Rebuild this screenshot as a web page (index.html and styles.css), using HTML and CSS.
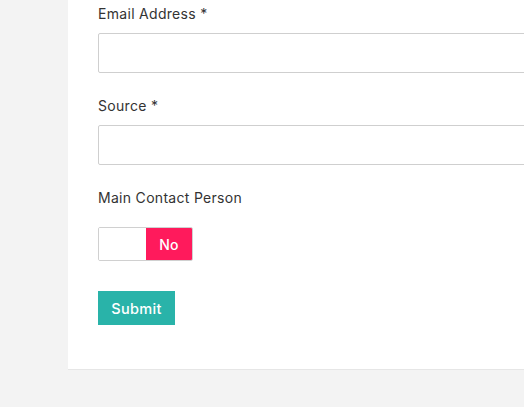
FILE: index.html
```html
<!DOCTYPE html>
<html>
    <head>
        <link rel="stylesheet" href="styles.css">
    </head>
    <body>
        <div class="card">
            <form class="form">
                <div class="group">
                    <label class="lbl">Email Address *</label>
                    <input class="field" type="text">
                </div>
                <div class="group">
                    <label class="lbl">Source *</label>
                    <input class="field" type="text">
                </div>
                <div class="group last">
                    <label class="lbl">Main Contact Person</label>
                </div>
                <div class="toggle">
                    <span class="toggle-off"></span>
                    <span class="toggle-on">No</span>
                </div>
                <button class="submit" type="button">Submit</button>
            </form>
        </div>
    </body>
</html>
```

FILE: styles.css
```css
body{
    margin: 0;
    background: #f3f3f3;
    font-family: 'Inter', 'Open Sans', sans-serif;
    color: #333;
    overflow: hidden;
}
.card{
    margin-left: 68px;
    background: white;
    border-bottom: solid 1px #e6e6e6;
    padding: 4px 0 44px 30px;
    overflow: hidden;
}
.group{
    display: flex;
    flex-direction: column;
    margin-bottom: 23px;
}
.group.last{
    margin-bottom: 19px;
}
.lbl{
    font-size: 14px;
    letter-spacing: 0.3px;
    line-height: 20px;
    margin-bottom: 9px;
}
.group.last .lbl{
    margin-bottom: 0;
}
.field{
    box-sizing: border-box;
    height: 40px;
    width: 520px;
    border: solid 1px #cfcfcf;
    border-radius: 2px;
    background: white;
    outline: none;
}
.toggle{
    display: flex;
    width: 95px;
    height: 34px;
    box-sizing: border-box;
    border: solid 1px #d0d0d0;
    border-radius: 2px;
    overflow: hidden;
    margin-bottom: 30px;
}
.toggle-off{
    width: 47px;
    background: white;
}
.toggle-on{
    flex: 1;
    background: #ff1a5c;
    color: white;
    font-size: 14px;
    font-weight: 500;
    letter-spacing: 0.3px;
    display: flex;
    align-items: center;
    justify-content: center;
}
.submit{
    display: block;
    width: 77px;
    height: 34px;
    background: #29b3a9;
    color: white;
    border: none;
    font-family: inherit;
    font-size: 14.5px;
    letter-spacing: 0.3px;
    font-weight: 500;
    padding: 0;
}
```
